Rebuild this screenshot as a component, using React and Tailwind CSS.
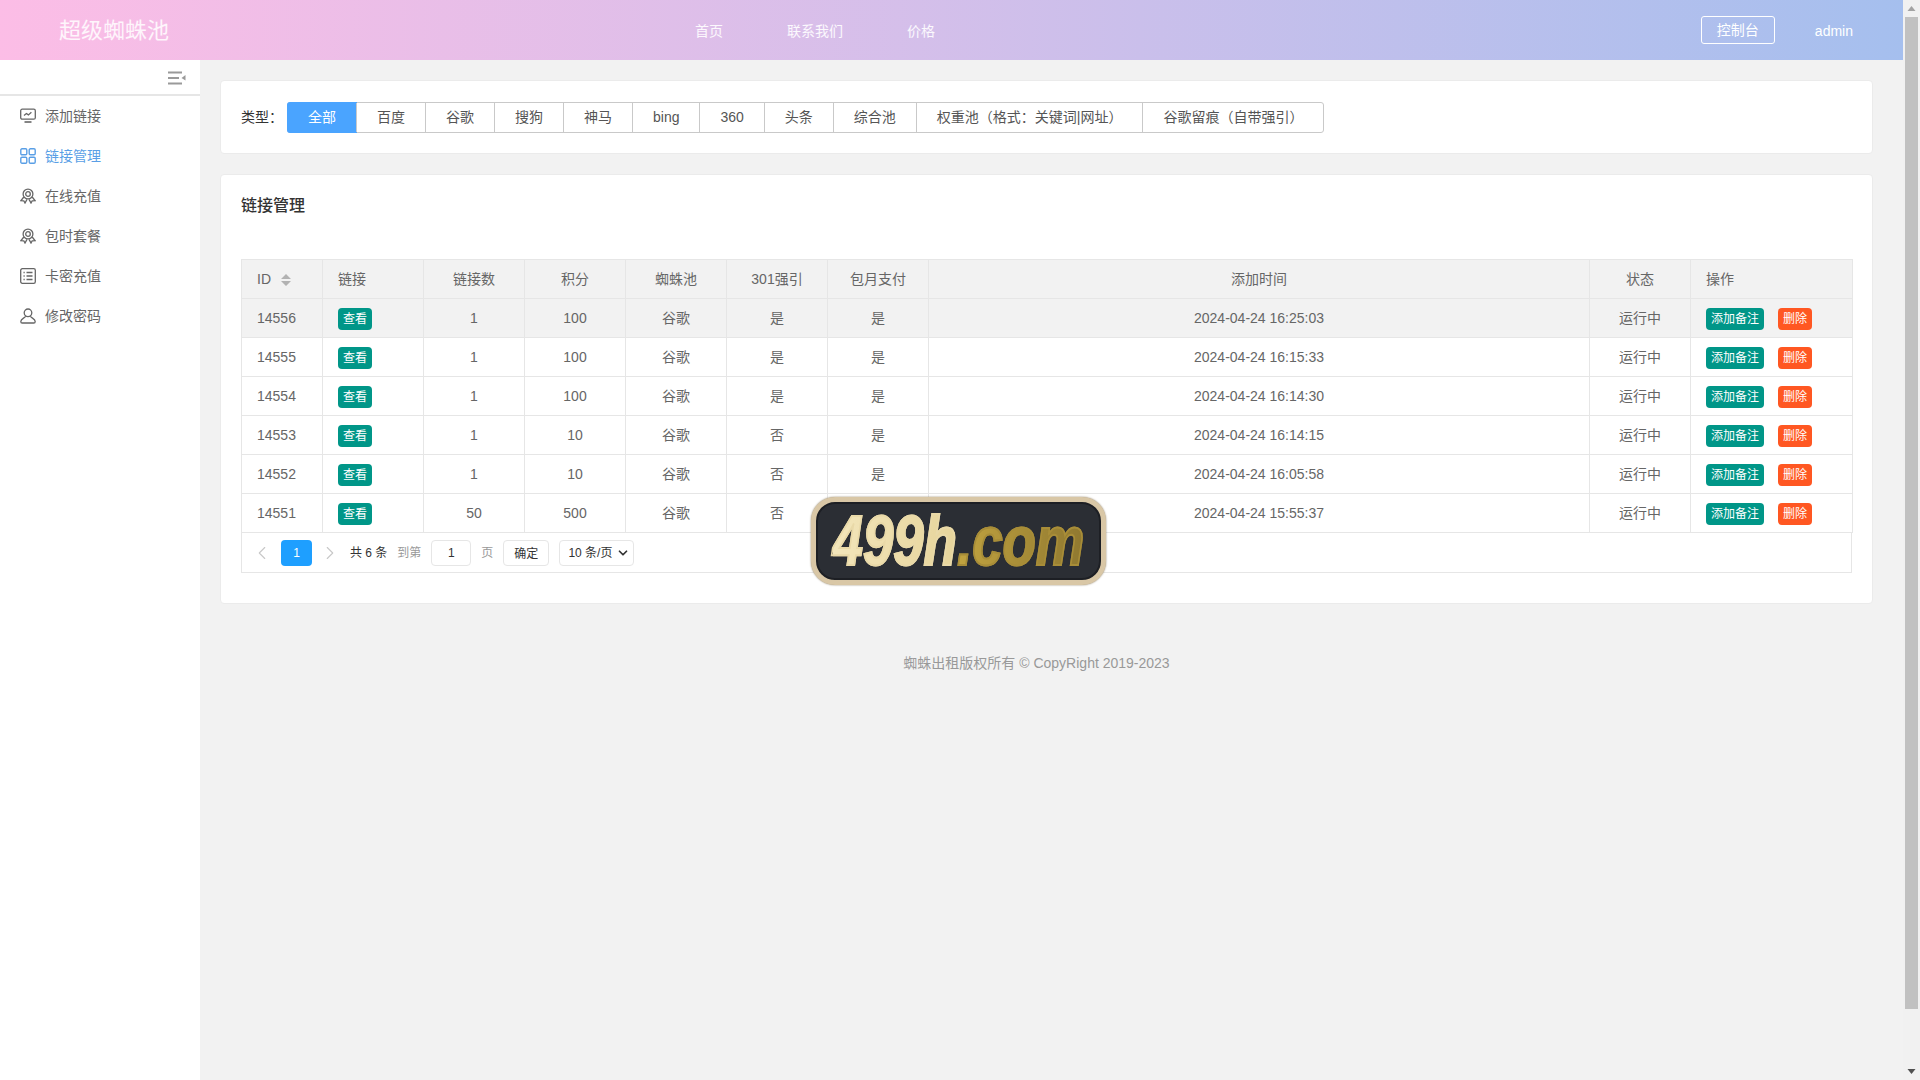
import React from 'react';
import { ChevronLeft, ChevronRight, ChevronDown } from 'lucide-react';

const tabs = ['全部', '百度', '谷歌', '搜狗', '神马', 'bing', '360', '头条', '综合池', '权重池（格式：关键词|网址）', '谷歌留痕（自带强引）'];

const columns = ['ID', '链接', '链接数', '积分', '蜘蛛池', '301强引', '包月支付', '添加时间', '状态', '操作'];

const rows = [
  { id: 14556, count: 1, score: 100, force: '是', time: '2024-04-24 16:25:03' },
  { id: 14555, count: 1, score: 100, force: '是', time: '2024-04-24 16:15:33' },
  { id: 14554, count: 1, score: 100, force: '是', time: '2024-04-24 16:14:30' },
  { id: 14553, count: 1, score: 10, force: '否', time: '2024-04-24 16:14:15' },
  { id: 14552, count: 1, score: 10, force: '否', time: '2024-04-24 16:05:58' },
  { id: 14551, count: 50, score: 500, force: '否', time: '2024-04-24 15:55:37' },
];

const MonitorIcon = () => (
  <svg width="16" height="16" viewBox="0 0 16 16" fill="none" stroke="currentColor" strokeWidth="1.3">
    <rect x="0.7" y="1.2" width="14.6" height="10" rx="1.5" />
    <path d="M4 7.5l2.4-2 2 1.4 3-2.6" />
    <path d="M4.5 14h7" strokeWidth="1.6" />
  </svg>
);

const GridIcon = () => (
  <svg width="16" height="16" viewBox="0 0 16 16" fill="none" stroke="currentColor" strokeWidth="1.4">
    <rect x="0.8" y="0.8" width="6" height="6" rx="1.2" />
    <rect x="9.2" y="0.8" width="6" height="6" rx="1.2" />
    <rect x="0.8" y="9.2" width="6" height="6" rx="1.2" />
    <rect x="9.2" y="9.2" width="6" height="6" rx="1.2" />
  </svg>
);

const AwardIcon = () => (
  <svg width="16" height="16" viewBox="0 0 16 16" fill="none" stroke="currentColor" strokeWidth="1.3">
    <circle cx="8" cy="6" r="4.9" />
    <circle cx="8" cy="6" r="2.3" />
    <path d="M3.8 9L1 12.6l2.8.2L5 15l2-3.6M12.2 9l2.8 3.6-2.8.2L11 15l-2-3.6" />
  </svg>
);

const ListIcon = () => (
  <svg width="16" height="16" viewBox="0 0 16 16" fill="none" stroke="currentColor" strokeWidth="1.3">
    <rect x="0.7" y="0.7" width="14.6" height="14.6" rx="1.6" />
    <path d="M3.5 4.5h1.2M6.5 4.5h6M3.5 8h1.2M6.5 8h6M3.5 11.5h1.2M6.5 11.5h6" />
  </svg>
);

const UserIcon = () => (
  <svg width="16" height="16" viewBox="0 0 16 16" fill="none" stroke="currentColor" strokeWidth="1.3">
    <circle cx="8" cy="4.8" r="3.8" />
    <path d="M5.6 8.2C4.8 10 .8 10.8.8 13.4c0 1 .5 1.6 1.4 1.6h11.6c.9 0 1.4-.6 1.4-1.6 0-2.6-4-3.4-4.8-5.2" />
  </svg>
);

const menu = [
  { label: '添加链接', icon: MonitorIcon },
  { label: '链接管理', icon: GridIcon, active: true },
  { label: '在线充值', icon: AwardIcon },
  { label: '包时套餐', icon: AwardIcon },
  { label: '卡密充值', icon: ListIcon },
  { label: '修改密码', icon: UserIcon },
];

const Sidebar = () => (
  <aside className="w-[200px] shrink-0 bg-white">
    <div className="h-[36px] border-b-2 border-[#e6e6e6] flex justify-end items-center pr-[14px] pt-[2px]">
      <svg width="18" height="14" viewBox="0 0 18 14" fill="#9a9a9a">
        <rect x="0" y="0.5" width="14" height="2" />
        <rect x="0" y="6" width="11" height="2" />
        <rect x="0" y="11.5" width="14" height="2" />
        <path d="M17.5 4v5.5L13.5 7z" />
      </svg>
    </div>
    <nav>
      {menu.map((item) => {
        const Icon = item.icon;
        return (
          <div
            key={item.label}
            className={`h-[40px] flex items-center gap-[9px] pl-[20px] text-sm ${item.active ? 'text-[#5a9fe6]' : 'text-[#666]'}`}
          >
            <Icon />
            <span>{item.label}</span>
          </div>
        );
      })}
    </nav>
  </aside>
);

const Tag = ({ color, width, children }) => (
  <span className={`inline-flex items-center justify-center h-[22px] rounded-sm text-xs text-white ${color} ${width}`}>{children}</span>
);

const App = () => {
  return (
    <div className="flex h-screen overflow-hidden bg-[#f2f2f2] text-[#666] [font-family:'Liberation_Sans','Noto_Sans_CJK_SC',sans-serif]">
      <div className="relative flex-1 min-w-0 flex flex-col">
        {/* Header */}
        <header className="h-[60px] shrink-0 flex items-center bg-gradient-to-r from-[#fcbde6] to-[#a5bfee] text-white">
          <div className="w-[695px] pl-[59px] pt-[1px] text-[22px] text-white/85">超级蜘蛛池</div>
          <div className="flex gap-[64px] pt-[1px] text-sm text-white/90">
            <span>首页</span>
            <span>联系我们</span>
            <span>价格</span>
          </div>
          <div className="flex-1" />
          <button className="w-[74px] h-[28px] border border-white rounded-[3px] text-sm mr-[40px]">控制台</button>
          <span className="text-sm pt-[1px] mr-[50px]">admin</span>
        </header>

        <div className="flex-1 flex min-h-0">
          <Sidebar />

          <main className="flex-1 min-w-0 pl-5 pr-[30px] pt-5">
            {/* Type filter */}
            <div className="h-[74px] bg-white border border-[#ebebeb] rounded-[4px] pl-5 flex items-center text-sm">
              <span className="w-[46px] text-[#333]">类型：</span>
              <div className="flex h-[31px] border border-[#c9c9c9] rounded-[3px]">
                {tabs.map((tab, i) => (
                  <div
                    key={tab}
                    className={`px-5 flex items-center whitespace-nowrap ${i > 0 ? 'border-l border-[#c9c9c9]' : ''} ${i === 0 ? 'bg-[#4aa4ff] text-white -m-px rounded-l-[3px] h-[31px] w-[70px] justify-center' : 'text-[#555]'}`}
                  >
                    {tab}
                  </div>
                ))}
              </div>
            </div>

            {/* Link table */}
            <div className="mt-5 h-[430px] bg-white border border-[#ebebeb] rounded-[4px] px-5 pt-[19px]">
              <h2 className="text-base leading-6 font-medium text-[#333] mb-[41px]">链接管理</h2>
              <table className="w-[1611px] table-fixed border-collapse text-sm">
                <colgroup>
                  <col className="w-[81px]" />
                  <col className="w-[101px]" />
                  <col className="w-[101px]" />
                  <col className="w-[101px]" />
                  <col className="w-[101px]" />
                  <col className="w-[101px]" />
                  <col className="w-[101px]" />
                  <col className="w-[661px]" />
                  <col className="w-[101px]" />
                  <col className="w-[162px]" />
                </colgroup>
                <thead>
                  <tr className="bg-[#f2f2f2]">
                    {columns.map((col, i) => (
                      <th
                        key={col}
                        className={`h-[39px] border border-[#e6e6e6] font-normal px-[15px] ${i === 0 || i === 1 || i === 9 ? 'text-left' : 'text-center'}`}
                      >
                        {col}
                        {i === 0 && (
                          <svg className="inline-block ml-[10px] align-[-2px]" width="10" height="12" viewBox="0 0 10 12" fill="#b2b2b2">
                            <path d="M5 0l5 5H0zM0 7h10l-5 5z" />
                          </svg>
                        )}
                      </th>
                    ))}
                  </tr>
                </thead>
                <tbody>
                  {rows.map((row, idx) => (
                    <tr key={row.id} className={idx === 0 ? 'bg-[#f2f2f2]' : ''}>
                      <td className="h-[39px] border border-[#e6e6e6] px-[15px]">{row.id}</td>
                      <td className="border border-[#e6e6e6] px-[15px]">
                        <div className="flex pt-[2px]">
                          <Tag color="bg-[#009688]" width="w-[34px]">查看</Tag>
                        </div>
                      </td>
                      <td className="border border-[#e6e6e6] text-center">{row.count}</td>
                      <td className="border border-[#e6e6e6] text-center">{row.score}</td>
                      <td className="border border-[#e6e6e6] text-center">谷歌</td>
                      <td className="border border-[#e6e6e6] text-center">{row.force}</td>
                      <td className="border border-[#e6e6e6] text-center">是</td>
                      <td className="border border-[#e6e6e6] text-center">{row.time}</td>
                      <td className="border border-[#e6e6e6] text-center">运行中</td>
                      <td className="border border-[#e6e6e6] px-[15px]">
                        <div className="flex gap-[14px] pt-[2px]">
                          <Tag color="bg-[#009688]" width="w-[58px]">添加备注</Tag>
                          <Tag color="bg-[#ff5722]" width="w-[34px]">删除</Tag>
                        </div>
                      </td>
                    </tr>
                  ))}
                </tbody>
              </table>

              {/* Pagination */}
              <div className="w-[1611px] h-[40px] border-x border-b border-[#e6e6e6] flex items-start pt-[7px] text-xs">
                <ChevronLeft className="ml-[9px] mt-[2px] text-[#c8c8c8]" size={22} strokeWidth={1.2} />
                <span className="ml-[8px] w-[31px] h-[26px] bg-[#1e9fff] text-white rounded-sm flex items-center justify-center">1</span>
                <ChevronRight className="ml-[7px] mt-[2px] text-[#c8c8c8]" size={22} strokeWidth={1.2} />
                <span className="ml-[9px] leading-[26px] text-[#333] whitespace-pre">共 6 条</span>
                <span className="ml-[10px] leading-[26px] text-[#999]">到第</span>
                <span className="ml-[10px] w-[40px] h-[26px] border border-[#e6e6e6] rounded-sm flex items-center justify-center text-[#333]">1</span>
                <span className="ml-[10px] leading-[26px] text-[#999]">页</span>
                <span className="ml-[10px] w-[46px] h-[26px] border border-[#e6e6e6] rounded-sm flex items-center justify-center pt-[1px] text-[#333]">确定</span>
                <span className="ml-[10px] w-[75px] h-[26px] border border-[#e6e6e6] rounded-sm flex items-center justify-between pl-[8px] pr-[3px] text-[#333]">
                  10 条/页
                  <ChevronDown size={14} strokeWidth={3} />
                </span>
              </div>
            </div>

            <footer className="mt-[49px] mr-[20px] text-center text-sm text-[#999]">蜘蛛出租版权所有 © CopyRight 2019-2023</footer>
          </main>
        </div>

        {/* Watermark badge over the table */}
        <div className="absolute left-[811px] top-[497px] w-[295px] h-[88px] rounded-[24px] bg-[#2b2e34] border-[5px] border-[#d9c7a6] shadow-[inset_0_0_0_2px_#1d1f24,0_0_2px_#8a7a5c] flex items-center justify-center overflow-hidden">
          <div className="scale-x-[0.78] italic font-bold text-[70px] leading-none whitespace-nowrap text-transparent bg-clip-text">
            <span className="bg-clip-text bg-gradient-to-r from-[#f3e6bb] to-[#e6d49b] [-webkit-text-stroke:2px_#e9d9a8]">499h</span>
            <span className="bg-clip-text bg-gradient-to-r from-[#c2a440] to-[#8f7830] [-webkit-text-stroke:2px_#a88d38]">.com</span>
          </div>
        </div>
      </div>

      {/* Scrollbar */}
      <div className="w-[17px] shrink-0 bg-[#f1f1f1] flex flex-col items-center">
        <svg className="h-[17px] shrink-0" width="9" height="17" viewBox="0 0 9 17" fill="#a3a3a3">
          <path d="M4.5 6l4 5h-8z" />
        </svg>
        <div className="w-[13px] h-[992px] bg-[#c1c1c1] shrink-0" />
        <div className="flex-1" />
        <svg className="h-[17px] shrink-0" width="9" height="17" viewBox="0 0 9 17" fill="#505050">
          <path d="M.5 6h8l-4 5z" />
        </svg>
      </div>
    </div>
  );
};

export default App;
